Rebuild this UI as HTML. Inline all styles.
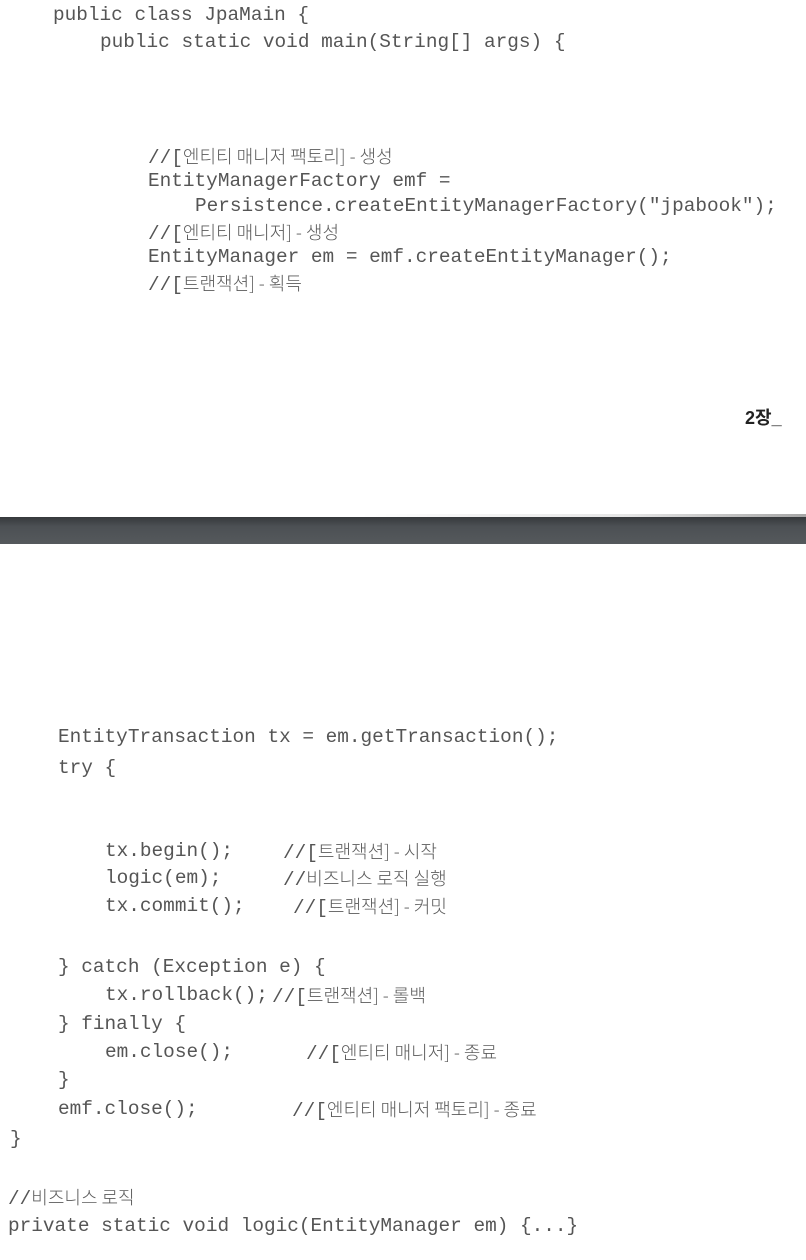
<!DOCTYPE html>
<html><head><meta charset="utf-8"><style>
html,body{margin:0;padding:0;background:#fff;}
body{width:806px;height:1260px;position:relative;overflow:hidden;}
.l{position:absolute;white-space:pre;font-family:"Liberation Mono","Noto Sans CJK KR",monospace;font-size:19.4px;line-height:24px;color:#555;height:24px;}
.k{font-family:"Noto Sans CJK KR","Liberation Sans",sans-serif;font-size:18px;color:#5a5a5a;font-weight:300;}
.bar{position:absolute;left:0;top:517px;width:806px;height:27px;background:linear-gradient(#36393c,#4c5054 35%,#55595c);}
.sh{position:absolute;left:360px;top:514px;width:446px;height:3px;background:linear-gradient(90deg,rgba(0,0,0,0),rgba(0,0,0,0.1) 60%,rgba(0,0,0,0.35));}
.pg{position:absolute;left:745px;top:404px;font-family:"Liberation Sans","Noto Sans CJK KR",sans-serif;font-weight:bold;font-size:18px;color:#222;}
</style></head><body>
<div class="l" style="left:53px;top:3px">public class JpaMain {</div>
<div class="l" style="left:100px;top:30px">public static void main(String[] args) {</div>
<div class="l" style="left:148px;top:144px">//[<span class="k">엔티티 매니저 팩토리] - 생성</span></div>
<div class="l" style="left:148px;top:169px">EntityManagerFactory emf =</div>
<div class="l" style="left:195px;top:194px">Persistence.createEntityManagerFactory("jpabook");</div>
<div class="l" style="left:148px;top:220px">//[<span class="k">엔티티 매니저] - 생성</span></div>
<div class="l" style="left:148px;top:245px">EntityManager em = emf.createEntityManager();</div>
<div class="l" style="left:148px;top:271px">//[<span class="k">트랜잭션] - 획득</span></div>
<div class="pg">2장_</div>
<div class="sh"></div>
<div class="bar"></div>
<div class="l" style="left:58px;top:725px">EntityTransaction tx = em.getTransaction();</div>
<div class="l" style="left:58px;top:756px">try {</div>
<div class="l" style="left:105px;top:839px">tx.begin();</div>
<div class="l" style="left:283px;top:839px">//[<span class="k">트랜잭션] - 시작</span></div>
<div class="l" style="left:105px;top:866px">logic(em);</div>
<div class="l" style="left:283px;top:866px">//<span class="k">비즈니스 로직 실행</span></div>
<div class="l" style="left:105px;top:894px">tx.commit();</div>
<div class="l" style="left:293px;top:894px">//[<span class="k">트랜잭션] - 커밋</span></div>
<div class="l" style="left:58px;top:955px">} catch (Exception e) {</div>
<div class="l" style="left:105px;top:983px">tx.rollback();</div>
<div class="l" style="left:272px;top:983px">//[<span class="k">트랜잭션] - 롤백</span></div>
<div class="l" style="left:58px;top:1012px">} finally {</div>
<div class="l" style="left:105px;top:1040px">em.close();</div>
<div class="l" style="left:306px;top:1040px">//[<span class="k">엔티티 매니저] - 종료</span></div>
<div class="l" style="left:58px;top:1068px">}</div>
<div class="l" style="left:58px;top:1097px">emf.close();</div>
<div class="l" style="left:292px;top:1097px">//[<span class="k">엔티티 매니저 팩토리] - 종료</span></div>
<div class="l" style="left:10px;top:1127px">}</div>
<div class="l" style="left:8px;top:1185px">//<span class="k">비즈니스 로직</span></div>
<div class="l" style="left:8px;top:1214px">private static void logic(EntityManager em) {...}</div>
</body></html>
